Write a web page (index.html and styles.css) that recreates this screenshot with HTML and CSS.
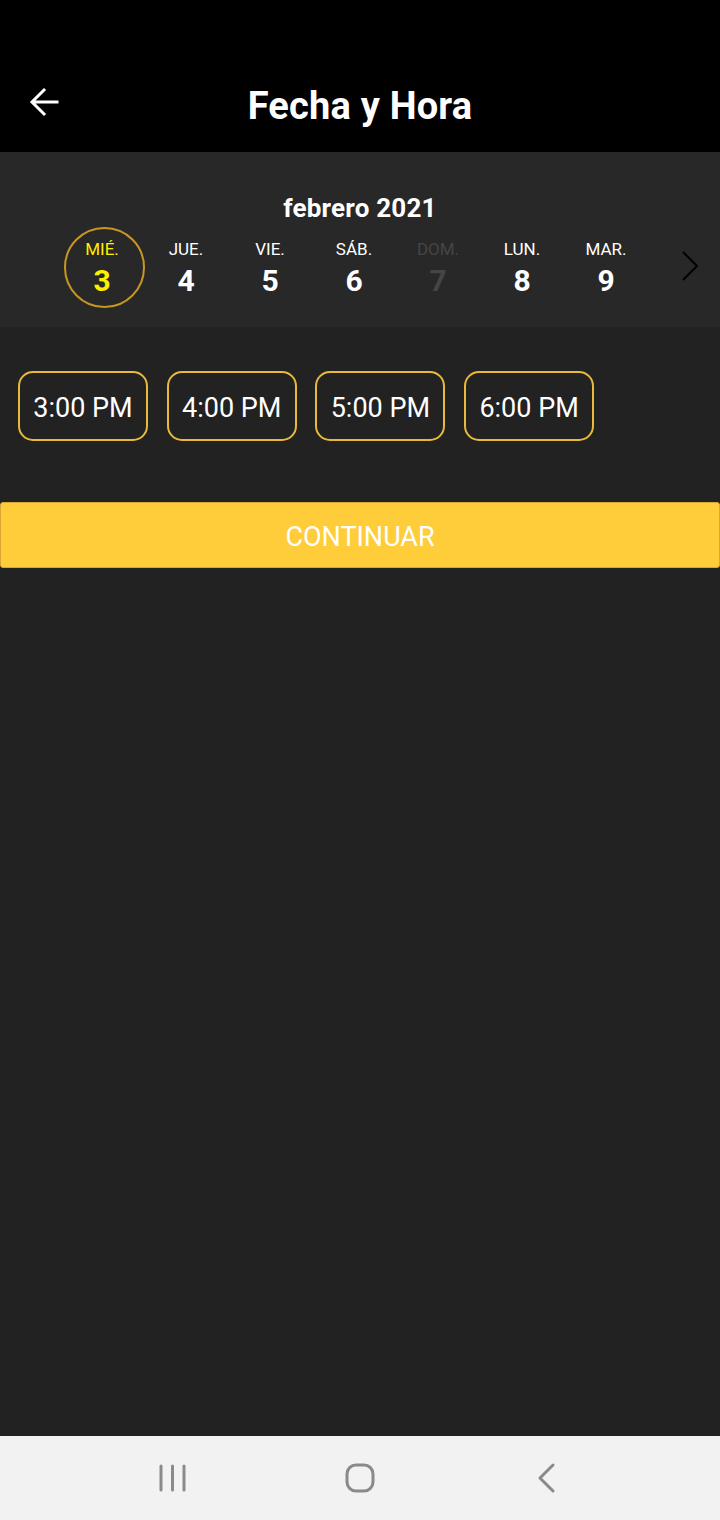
FILE: index.html
```html
<!DOCTYPE html>
<html lang="es">
<head>
<meta charset="utf-8">
<title>Fecha y Hora</title>
<link rel="stylesheet" href="styles.css">
</head>
<body>
<div class="screen">
  <header class="appbar">
    <button class="back" aria-label="Atrás">
      <svg width="32" height="32" viewBox="0 0 32 32"><path d="M29 15 H5 M16 3 L4 15 L16 27" fill="none" stroke="#fff" stroke-width="3" stroke-linecap="square"/></svg>
    </button>
    <h1 class="title">Fecha y Hora</h1>
  </header>

  <section class="calendar">
    <div class="month">febrero 2021</div>
    <div class="days">
      <div class="day selected"><span class="dname">MIÉ.</span><span class="dnum">3</span></div>
      <div class="day"><span class="dname">JUE.</span><span class="dnum">4</span></div>
      <div class="day"><span class="dname">VIE.</span><span class="dnum">5</span></div>
      <div class="day"><span class="dname">SÁB.</span><span class="dnum">6</span></div>
      <div class="day disabled"><span class="dname">DOM.</span><span class="dnum">7</span></div>
      <div class="day"><span class="dname">LUN.</span><span class="dnum">8</span></div>
      <div class="day"><span class="dname">MAR.</span><span class="dnum">9</span></div>
      <svg class="next" width="18" height="32" viewBox="0 0 18 32"><path d="M2 2 L16 16 L2 30" fill="none" stroke="#000" stroke-width="2"/></svg>
    </div>
  </section>

  <section class="times">
    <button class="slot">3:00 PM</button>
    <button class="slot">4:00 PM</button>
    <button class="slot">5:00 PM</button>
    <button class="slot">6:00 PM</button>
  </section>

  <button class="continue">CONTINUAR</button>

  <div class="spacer"></div>

  <nav class="navbar">
    <div class="navcell">
      <svg width="30" height="30" viewBox="0 0 30 30"><path d="M3 3 V27 M14.5 3 V27 M26 3 V27" stroke="#8a8a8a" stroke-width="3" stroke-linecap="round"/></svg>
    </div>
    <div class="navcell">
      <svg width="30" height="30" viewBox="0 0 30 30"><rect x="2" y="2" width="26" height="26" rx="9" fill="none" stroke="#8a8a8a" stroke-width="3"/></svg>
    </div>
    <div class="navcell">
      <svg width="30" height="30" viewBox="0 0 30 30"><path d="M21 2 L8 15 L21 28" fill="none" stroke="#8a8a8a" stroke-width="3" stroke-linecap="round" stroke-linejoin="round"/></svg>
    </div>
  </nav>
</div>
</body>
</html>
```

FILE: styles.css
```css
* { box-sizing: border-box; }

html, body {
  margin: 0;
  padding: 0;
  background: #222222;
  font-family: Roboto, "Liberation Sans", Arial, sans-serif;
}

.screen {
  width: 720px;
  height: 1520px;
  display: flex;
  flex-direction: column;
  background: #222222;
}

.appbar {
  height: 152px;
  background: #000;
  padding-top: 60px;
  display: flex;
  align-items: center;
  justify-content: center;
  position: relative;
}

.back {
  position: absolute;
  left: 28px;
  top: 87px;
  width: 32px;
  height: 32px;
  padding: 0;
  border: 0;
  background: none;
}

.back svg { display: block; }

.title {
  margin: 0;
  color: #fff;
  font-size: 38px;
  font-weight: 700;
  line-height: 44px;
  letter-spacing: 0.2px;
}

.calendar {
  height: 175px;
  background: #282828;
  padding-top: 41px;
}

.month {
  text-align: center;
  color: #fff;
  font-size: 26px;
  font-weight: 700;
  line-height: 30px;
  letter-spacing: 0.2px;
}

.days {
  margin-top: 5px;
  display: flex;
  align-items: flex-start;
  padding-left: 60px;
}

.day {
  width: 84px;
  height: 76px;
  padding-top: 11px;
  display: flex;
  flex-direction: column;
  align-items: center;
  color: #fff;
  position: relative;
}

.dname {
  font-size: 17px;
  line-height: 20px;
}

.dnum {
  margin-top: 6px;
  font-size: 30px;
  font-weight: 700;
  line-height: 32px;
}

.day.selected { color: #ffee00; }

.day.selected::before {
  content: "";
  position: absolute;
  left: 4px;
  top: -1px;
  width: 77px;
  height: 77px;
  border: 2px solid #c8971f;
  border-radius: 50%;
}

.day.disabled { color: #454545; }

.next {
  margin-left: 33px;
  margin-top: 22px;
  display: block;
}

.times {
  padding: 44px 18px 0;
  display: flex;
  gap: 18.7px;
}

.slot {
  width: 130px;
  height: 70px;
  border: 2px solid #e8b93c;
  border-radius: 15px;
  background: #222222;
  color: #fff;
  font-family: Roboto, "Liberation Sans", Arial, sans-serif;
  font-size: 27px;
  padding: 3px 0 0;
}

.continue {
  margin-top: 61px;
  height: 66px;
  width: 720px;
  background: #ffcc3a;
  border: 1px solid #d9a832;
  border-radius: 3px;
  color: #fff;
  font-family: Roboto, "Liberation Sans", Arial, sans-serif;
  font-size: 27px;
  padding: 3px 0 0;
}

.spacer { flex: 1; }

.navbar {
  height: 84px;
  background: #f2f2f2;
  display: flex;
  justify-content: center;
  align-items: center;
}

.navcell {
  width: 187px;
  display: flex;
  justify-content: center;
  align-items: center;
}

.navcell svg { display: block; }
```
